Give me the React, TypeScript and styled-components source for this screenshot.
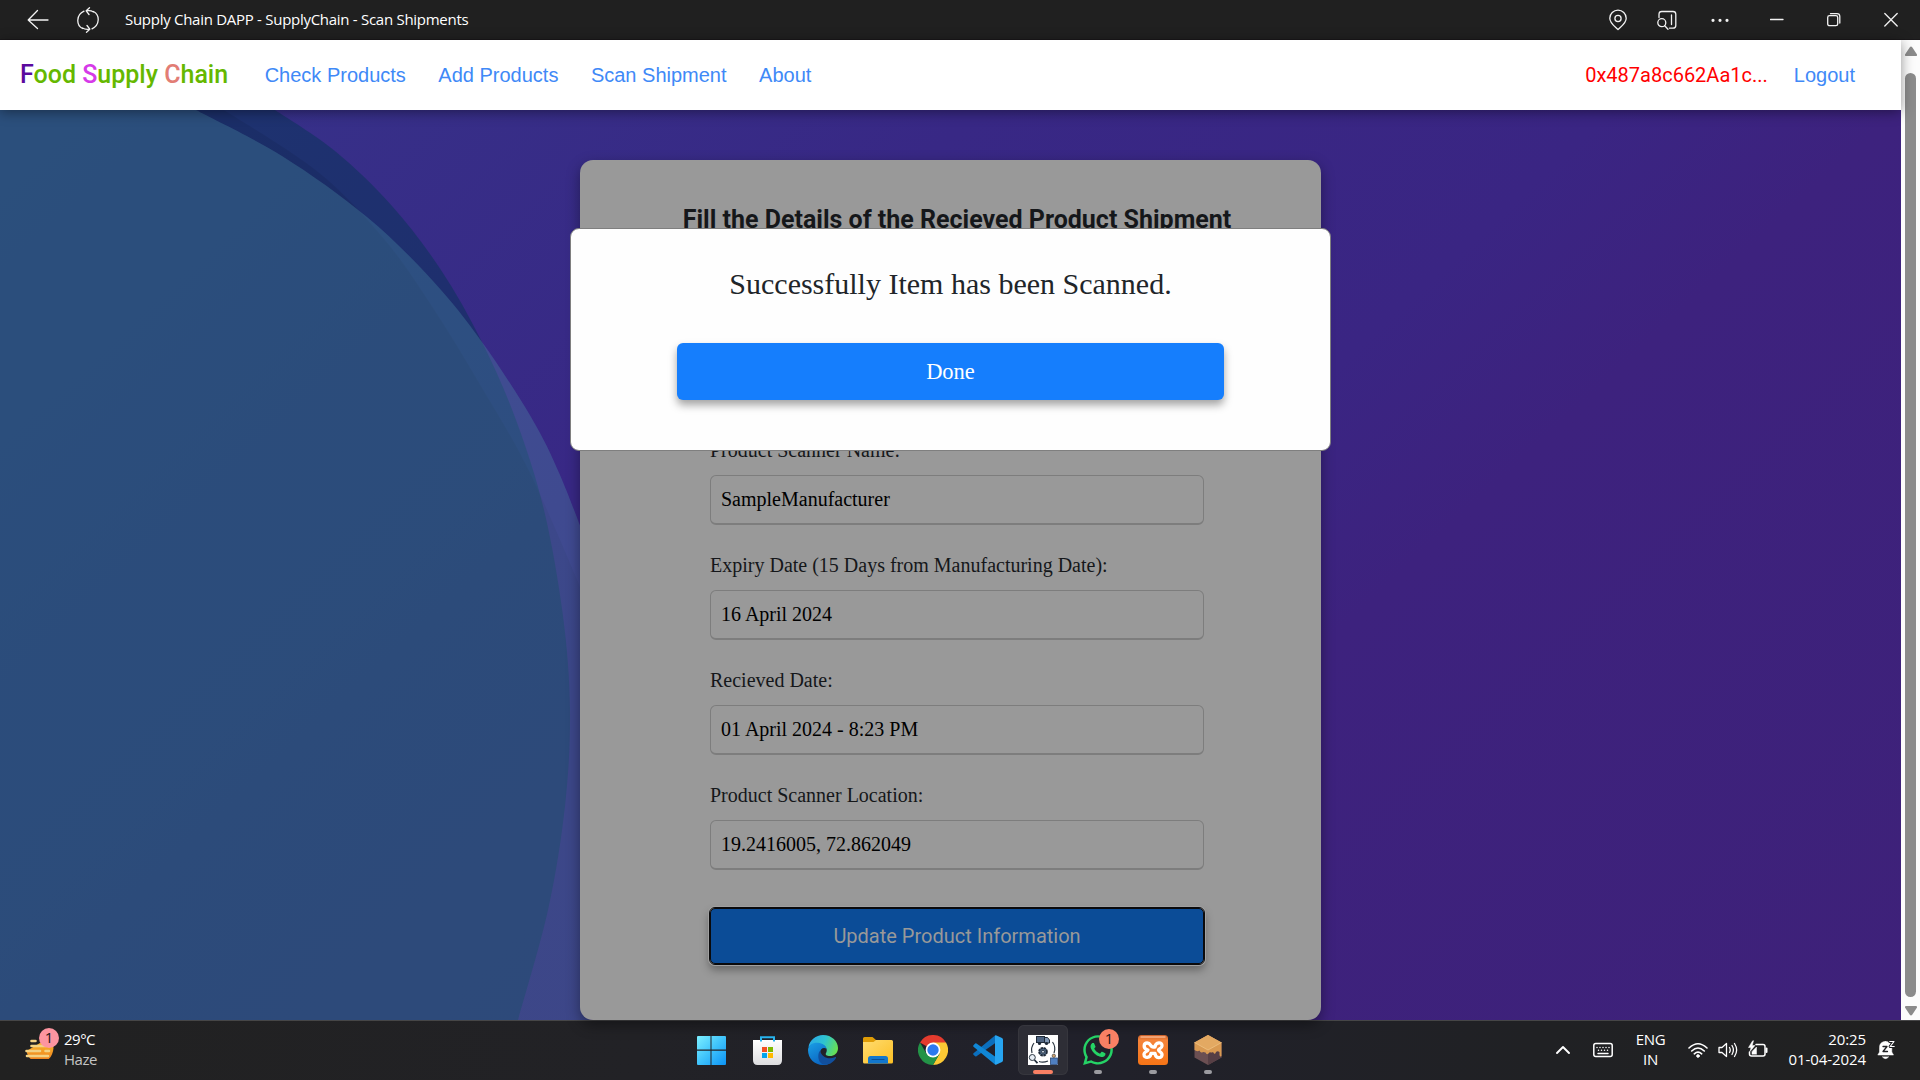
import React from "react";
import styled, { createGlobalStyle } from "styled-components";
import { FaWhatsapp } from "react-icons/fa";

const SERIF = `"Liberation Serif", "Times New Roman", serif`;
const SANS = `"Liberation Sans", Arial, sans-serif`;
const ROBOTO = `Roboto, "Liberation Sans", sans-serif`;
const SYSTEM = `"Open Sans", "Noto Sans", sans-serif`;

const GlobalStyle = createGlobalStyle`
  *, *::before, *::after { box-sizing: border-box; }
  body { margin: 0; overflow: hidden; background: #202020; }
`;

const Screen = styled.div`
  display: flex;
  flex-direction: column;
  width: 1920px;
  height: 1080px;
`;

/* ---------- window title bar ---------- */

const TitleBar = styled.header`
  display: flex;
  align-items: center;
  height: 40px;
  flex: none;
  padding: 0 22px 0 27px;
  background: #202020;
  border-bottom: 1px solid #1a181a;
  color: #fff;
`;

const WindowTitle = styled.span`
  flex: 1;
  margin-left: 26px;
  padding-bottom: 2px;
  font: 15px/20px ${SYSTEM};
  letter-spacing: -0.28px;
  white-space: nowrap;
`;

const TitleIcon = styled.svg<{ $w: number; $gap?: number }>`
  display: block;
  flex: none;
  width: ${(p) => p.$w}px;
  height: 26px;
  margin-left: ${(p) => p.$gap ?? 0}px;
  fill: none;
  stroke: #f2f2f2;
  stroke-width: 1.3;
  stroke-linecap: round;
  stroke-linejoin: round;
`;

/* ---------- browser viewport ---------- */

const Viewport = styled.div`
  display: flex;
  height: 980px;
  flex: none;
`;

const Page = styled.div`
  display: flex;
  flex-direction: column;
  width: 1901px;
`;

const NavBar = styled.nav`
  display: flex;
  align-items: center;
  height: 70px;
  flex: none;
  padding: 0 46px 0 20px;
  background: #fff;
  box-shadow: 0 2px 12px rgba(0, 0, 0, 0.42);
  z-index: 2;
`;

const Brand = styled.span`
  margin-right: 36.5px;
  font: 500 25px/30px ${ROBOTO};
  color: #65b800;
`;

const Initial = styled.span<{ $color: string }>`
  color: ${(p) => p.$color};
`;

const NavLinks = styled.div`
  display: flex;
  flex: 1;
  gap: 32.5px;
`;

const NavLink = styled.a`
  font: 20px/30px ${SANS};
  color: #4089f7;
  white-space: nowrap;
`;

const Account = styled.span`
  margin-right: 26px;
  font: 20px/30px ${ROBOTO};
  color: #ff0000;
`;

const Main = styled.main`
  position: relative;
  flex: 1;
  padding: 50px 0 0 580px;
  background: linear-gradient(137deg, #36338a 0%, #382885 34%, #3a2583 56%, #3d227e 66%, #3e2179 100%);
`;

const Backdrop = styled.svg`
  position: absolute;
  inset: 0;
  width: 100%;
  height: 100%;
`;

const Card = styled.section`
  position: relative;
  display: flex;
  flex-direction: column;
  width: 741px;
  height: 860px;
  padding: 45px 117px 0 130px;
  border-radius: 13px;
  background: #999;
  box-shadow: 0 5px 14px rgba(0, 0, 0, 0.38);
`;

const CardTitle = styled.h1`
  align-self: center;
  margin: 0 0 200px;
  font: bold 25px/30px ${ROBOTO};
  color: #15171a;
  white-space: nowrap;
`;

const Field = styled.label`
  display: flex;
  flex-direction: column;
  gap: 10px;
  margin-bottom: 25px;
  font: 20px/30px ${SERIF};
  color: #15171a;
`;

const FieldValue = styled.span`
  display: flex;
  align-items: center;
  height: 50px;
  padding: 0 10px 2px;
  border: 1px solid #7d7d7d;
  border-bottom-width: 2px;
  border-radius: 6px;
  color: #000;
`;

const SubmitButton = styled.button`
  height: 56px;
  margin-top: 13px;
  padding: 0;
  border: 1px solid #0a0a0c;
  border-radius: 5px;
  outline: 1px solid #0a0a0c;
  background: #0b4c97;
  box-shadow: 0 0 0 2px #a0a0a0, 0 5px 9px 1px rgba(0, 0, 0, 0.34);
  font: 20px/30px ${ROBOTO};
  color: #999;
`;

const Dialog = styled.div`
  position: absolute;
  top: 118px;
  left: 570px;
  display: flex;
  flex-direction: column;
  align-items: center;
  width: 761px;
  height: 223px;
  padding-top: 32px;
  border: 1px solid #7f7f7f;
  border-radius: 9px;
  background: #fefefe;
`;

const DialogText = styled.p`
  margin: 0;
  font: 30px/45px ${SERIF};
  color: #212529;
`;

const DoneButton = styled.button`
  width: 547px;
  height: 57px;
  margin-top: 37px;
  padding: 0;
  border: 0;
  border-radius: 6px;
  background: #157efd;
  box-shadow: 0 5px 8px rgba(0, 0, 0, 0.36);
  font: 22.5px/34px ${SERIF};
  color: #fff;
`;

const Scrollbar = styled.div`
  display: flex;
  flex-direction: column;
  align-items: center;
  width: 19px;
  padding: 6px 0 4px;
  background: #fcfcfc;
`;

const Arrow = styled.svg`
  display: block;
  width: 14px;
  height: 11px;
  fill: #8b8b8b;
`;

const Thumb = styled.div`
  flex: 1;
  width: 11px;
  margin: 16px 0 8px;
  border-radius: 6px;
  background: #8b8b8b;
`;

/* ---------- taskbar ---------- */

const Taskbar = styled.footer`
  display: grid;
  grid-template-columns: 684px 600px 1fr;
  height: 60px;
  border-top: 1px solid #464647;
  background: linear-gradient(90deg, #212121 0%, #222226 33%, #21212b 55%, #202124 80%, #212121 100%);
  color: #fff;
  font: 15px/20px ${SYSTEM};
`;

const Weather = styled.div`
  display: flex;
  align-items: flex-start;
  padding: 8px 0 0 24px;
`;

const WeatherIcon = styled.span`
  position: relative;
  width: 40px;
  height: 40px;
`;

const WeatherText = styled.div<{ $muted?: boolean }>`
  letter-spacing: -0.5px;
  color: ${(p) => (p.$muted ? "#c4c4c4" : "#fff")};
`;

const Badge = styled.span<{ $color: string; $x: number; $y: number }>`
  position: absolute;
  left: ${(p) => p.$x}px;
  top: ${(p) => p.$y}px;
  width: 20px;
  height: 20px;
  border-radius: 50%;
  background: ${(p) => p.$color};
  color: #1c1416;
  font: 15px/19px ${SYSTEM};
  text-align: center;
`;

const Apps = styled.div`
  display: flex;
  gap: 5px;
  padding: 4px 0 0 4px;
`;

const AppCell = styled.div<{ $active?: boolean; $shift?: number }>`
  position: relative;
  display: flex;
  flex-direction: column;
  align-items: center;
  width: 50px;
  height: 50px;
  padding: 10px ${(p) => p.$shift ?? 0}px 0 0;
  border-radius: 6px;
  background: ${(p) => (p.$active ? "#2e2e36" : "transparent")};
  box-shadow: ${(p) => (p.$active ? "inset 0 0 0 1px #36363d" : "none")};
`;

const AppIcon = styled.svg`
  display: block;
  flex: none;
  width: 30px;
  height: 30px;
`;

const Running = styled.span<{ $active?: boolean }>`
  width: ${(p) => (p.$active ? 20 : 8)}px;
  height: 4px;
  margin-top: 5px;
  border-radius: 2px;
  background: ${(p) => (p.$active ? "#f98064" : "#9b9ba0")};
`;

const Tray = styled.div`
  display: flex;
  align-items: center;
  justify-content: flex-end;
  padding: 0 25px 2px 0;
`;

const TrayIcon = styled.svg<{ $w: number; $gap: number }>`
  display: block;
  flex: none;
  width: ${(p) => p.$w}px;
  height: 20px;
  margin-right: ${(p) => p.$gap}px;
  fill: none;
  stroke: #fff;
  stroke-width: 1.5;
  stroke-linecap: round;
  stroke-linejoin: round;
`;

const Language = styled.div`
  width: 40px;
  margin-right: 17px;
  padding-bottom: 1px;
  text-align: center;
  letter-spacing: -0.3px;
`;

const Clock = styled.div`
  margin-right: 11px;
  padding-bottom: 2px;
  text-align: right;
  letter-spacing: -0.08px;
`;

const fields = [
  ["Product Scanner Name:", "SampleManufacturer"],
  ["Expiry Date (15 Days from Manufacturing Date):", "16 April 2024"],
  ["Recieved Date:", "01 April 2024 - 8:23 PM"],
  ["Product Scanner Location:", "19.2416005, 72.862049"],
];

const links = ["Check Products", "Add Products", "Scan Shipment", "About"];

type Point = [number, number];

/* Closes the left side of the page behind a smooth curve through the points. */
function blob(points: Point[]) {
  let d = `M0 110 H${points[0][0]}`;
  for (let i = 0; i < points.length - 1; i++) {
    const a = points[Math.max(i - 1, 0)];
    const b = points[i];
    const c = points[i + 1];
    const e = points[Math.min(i + 2, points.length - 1)];
    d += ` C${b[0] + (c[0] - a[0]) / 6} ${b[1] + (c[1] - a[1]) / 6} ${c[0] - (e[0] - b[0]) / 6} ${c[1] - (e[1] - b[1]) / 6} ${c[0]} ${c[1]}`;
  }
  return `${d} V1020 H0 Z`;
}

const blueDisc: Point[] = [[275, 110], [335, 151], [392, 206], [441, 270], [482, 342], [516, 420], [544, 510], [563, 616], [570, 710], [565, 806], [548, 910], [518, 1020]];
const darkDisc: Point[] = [[224, 110], [318, 172], [384, 239], [433, 308], [482, 388], [531, 475], [590, 610]];
const tealDisc: Point[] = [[196, 110], [282, 156], [367, 217], [433, 281], [482, 342], [531, 417], [560, 475], [590, 552]];

function Shapes() {
  return (
    <Backdrop viewBox="0 110 1901 910" preserveAspectRatio="none">
      <path d={blob(blueDisc)} fill="rgb(0,52,80)" fillOpacity="0.44" />
      <path d={blob(darkDisc)} fill="#000" fillOpacity="0.07" />
      <path d={blob(tealDisc)} fill="rgb(82,152,170)" fillOpacity="0.31" />
    </Backdrop>
  );
}

function WeatherDrawing() {
  return (
    <AppIcon viewBox="0 0 30 30">
      <defs>
        <linearGradient id="sun" x1="0" y1="0" x2="0" y2="1">
          <stop offset="0" stopColor="#fbc02f" />
          <stop offset="1" stopColor="#ec7a1c" />
        </linearGradient>
      </defs>
      <path d="M2.500 22 C4 30 10 33.500 15.500 33.500 C23 33.500 29 28 29.500 19 L28 10 L16 14 Z" fill="url(#sun)" />
      <path d="M7.500 12 H11.500 M7.500 17 H22 M2.500 22 H16 M21.500 22 H25 M3 27 H24" stroke="#f3d283" strokeWidth="2.600" strokeLinecap="round" />
    </AppIcon>
  );
}

function StartIcon() {
  return (
    <AppIcon viewBox="0 0 30 30">
      <defs>
        <linearGradient id="win" x1="0" y1="0" x2="1" y2="1">
          <stop offset="0" stopColor="#7df0ff" />
          <stop offset="0.5" stopColor="#3fc3fb" />
          <stop offset="1" stopColor="#0c93f5" />
        </linearGradient>
      </defs>
      <path
        d="M2 1 H14.500 V14.500 H1 V2 Q1 1 2 1 Z M15.500 1 H29 Q30 1 30 2 V14.500 H15.500 Z M1 15.700 H14.500 V30 H2 Q1 30 1 29 Z M15.500 15.700 H30 V29 Q30 30 29 30 H15.500 Z"
        fill="url(#win)"
      />
    </AppIcon>
  );
}

function StoreIcon() {
  return (
    <AppIcon viewBox="0 0 30 30">
      <defs>
        <linearGradient id="bag" x1="0" y1="0" x2="0" y2="1">
          <stop offset="0" stopColor="#ffffff" />
          <stop offset="1" stopColor="#dddddf" />
        </linearGradient>
      </defs>
      <path d="M1 5 H30 V25 Q30 30 25.500 30 H5.500 Q1 30 1 25 Z" fill="url(#bag)" />
      <path d="M9 6.500 V2.200 H22 V6.500" fill="none" stroke="#27b4ee" strokeWidth="2" />
      <rect x="10" y="12" width="5" height="5" fill="#f25022" />
      <rect x="16" y="12" width="5" height="5" fill="#7fba00" />
      <rect x="10" y="18" width="5" height="5" fill="#00a4ef" />
      <rect x="16" y="18" width="5" height="5" fill="#ffb900" />
    </AppIcon>
  );
}

function EdgeIcon() {
  return (
    <AppIcon viewBox="0 0 30 30">
      <defs>
        <linearGradient id="edgeTop" x1="0" y1="0.300" x2="1" y2="0.600">
          <stop offset="0" stopColor="#2aa9e8" />
          <stop offset="0.500" stopColor="#2fc4cf" />
          <stop offset="1" stopColor="#69e04f" />
        </linearGradient>
        <linearGradient id="edgeLeft" x1="0" y1="0" x2="0.600" y2="1">
          <stop offset="0" stopColor="#1a9fe6" />
          <stop offset="1" stopColor="#0a63c0" />
        </linearGradient>
      </defs>
      <path d="M0.500 12 C1.500 5 8 0 15 0 C24 0 30 6.500 30 13 C30 18.500 26 21 22 21 C18.500 21 17.300 19.500 17.800 18.400 C18.500 17 19 16 18.600 14 C17.500 9.500 7 6 0.500 12 Z" fill="url(#edgeTop)" />
      <path d="M0 15 C0.300 9.500 5.500 7.200 10 7.800 C14.500 8.200 18 10.500 18.700 14 C16 11.500 12 13.500 12 18 C12 23.500 17 28.500 22 28.200 C20 29.500 17.500 30 15 30 C6.500 30 0 23.500 0 15 Z" fill="url(#edgeLeft)" />
      <path d="M12.200 15.800 C9 18.500 9.500 30 17.500 29.700 C22.500 29.500 26 26.500 28 23 C28.300 22 27.500 21.800 26.800 22.200 C21 25 13.500 22.500 12.200 15.800 Z" fill="#114f9d" />
    </AppIcon>
  );
}

function ExplorerIcon() {
  return (
    <AppIcon viewBox="0 0 30 30">
      <defs>
        <linearGradient id="folder" x1="0" y1="0" x2="1" y2="1">
          <stop offset="0" stopColor="#ffdc70" />
          <stop offset="1" stopColor="#fcbf24" />
        </linearGradient>
      </defs>
      <path d="M0 3.500 Q0 2 1.500 2 H9.500 L13 5 H28 V12 H0 Z" fill="#df9c06" />
      <path d="M0 7 H10.500 L13 5 H28.500 Q30 5 30 6.500 V27 Q30 28.500 28.500 28.500 H1.500 Q0 28.500 0 27 Z" fill="url(#folder)" />
      <path d="M5 28.500 V23.500 Q5 21 7.500 21 H22.500 Q25 21 25 23.500 V28.500 Z" fill="#1277cd" />
      <path d="M9 24.500 H21" stroke="#0a4f96" strokeWidth="1.200" strokeLinecap="round" />
    </AppIcon>
  );
}

function ChromeIcon() {
  return (
    <AppIcon viewBox="0 0 30 30">
      <path d="M15 15 L2 7.500 A15 15 0 0 1 28 7.500 Z" fill="#e33b2e" />
      <path d="M15 7.500 H28 A15 15 0 0 1 15 30 L21.500 18.700 Z" fill="#fcc934" />
      <path d="M2 7.500 A15 15 0 0 0 15 30 L21.500 18.700 L8.500 18.700 Z" fill="#239347" />
      <circle cx="15" cy="15" r="7.400" fill="#fff" />
      <circle cx="15" cy="15" r="5.700" fill="#2d79ef" />
    </AppIcon>
  );
}

function CodeIcon() {
  return (
    <AppIcon viewBox="0 0 30 30">
      <path d="M22 0.500 L22 8.300 L3.500 21.300 Q2.800 21.700 2.200 21.200 L0.500 19.700 Q-0.300 19 0.500 18.200 Z" fill="#0b6fbd" />
      <path d="M22 29.500 V21.500 L3.500 8.500 Q2.800 8 2.200 8.600 L0.500 10.200 Q-0.300 11 0.500 11.700 Z" fill="#1087d6" />
      <path d="M22 0.500 Q22.800 0 23.500 0.400 L29 3 Q30 3.500 30 4.700 V25.300 Q30 26.500 29 27 L23.500 29.600 Q22.700 30 22 29.500 Z" fill="#27a5f1" />
    </AppIcon>
  );
}

function SupplyChainIcon() {
  return (
    <AppIcon viewBox="0 0 30 30">
      <rect width="30" height="30" fill="#fff" />
      <path d="M6 8 A11.500 11.500 0 0 0 4 18 M24.500 7 A11.500 11.500 0 0 1 26 18 M11 26.500 Q15 28 20 26" fill="none" stroke="#2a3540" strokeWidth="1.200" />
      <rect x="8.500" y="1.500" width="8" height="6" fill="#4d6380" stroke="#1f2a38" />
      <path d="M16.500 2.500 H19.500 L21.500 5 V8 H16.500 Z" fill="#7f96b3" stroke="#1f2a38" />
      <circle cx="11.500" cy="8.500" r="1.600" fill="#1f2a38" />
      <circle cx="18.500" cy="8.500" r="1.600" fill="#1f2a38" />
      <circle cx="15" cy="16.700" r="3.800" fill="#55708f" stroke="#1f2a38" strokeWidth="2" strokeDasharray="2.400 0.600" />
      <circle cx="15" cy="16.700" r="1.500" fill="#c6d2e0" stroke="#1f2a38" strokeWidth="0.900" />
      <circle cx="4.300" cy="22.500" r="3" fill="#e8eef5" stroke="#2a3540" />
      <path d="M6.500 25 L9.500 28.200" stroke="#1f2a38" strokeWidth="1.800" />
      <rect x="22.500" y="23" width="7" height="6.500" fill="#4f7fc0" stroke="#2b4a78" strokeWidth="0.800" />
      <circle cx="25.800" cy="20.800" r="1.700" fill="#cfa06c" stroke="#2a3540" strokeWidth="0.600" />
    </AppIcon>
  );
}

function XamppIcon() {
  return (
    <AppIcon viewBox="0 0 30 30">
      <defs>
        <linearGradient id="xampp" x1="0" y1="0" x2="0" y2="1">
          <stop offset="0" stopColor="#c9602a" />
          <stop offset="0.180" stopColor="#f5843a" />
          <stop offset="1" stopColor="#f67416" />
        </linearGradient>
      </defs>
      <rect width="30" height="30" rx="3.500" fill="url(#xampp)" />
      <path d="M3 2 H27" stroke="#f9b48b" strokeWidth="1.500" strokeLinecap="round" />
      <path
        d="M10 15 C4.500 13.500 5.500 8 9.300 8 C13 8 12 12 15 12 H17 C17.500 7 24.500 6.500 24 11 C23.800 14 20.500 13.500 20.500 15 C20.500 16.500 24.500 17 24 20 C23.500 24 17.500 23.500 17 18.300 H13 C12.500 23.500 6 23.500 6 19.500 C6 16.500 10 16.500 10 15 Z"
        fill="none"
        stroke="#fff"
        strokeWidth="3.300"
        strokeLinejoin="round"
      />
    </AppIcon>
  );
}

function BlockIcon() {
  return (
    <AppIcon viewBox="0 0 30 30">
      <path d="M15 0 L28.500 7.500 V22.500 L15 30 L1.500 22.500 V7.500 Z" fill="#6b4f52" />
      <path d="M15 15 L28.500 7.500 V22.500 L15 30 Z" fill="#573f45" />
      <path d="M15 0 L28.500 7.500 V21 Q27 22.500 26.500 20 V17 Q24.500 15.500 23 17 Q22.500 19.500 21 18.500 L20 17 Q18 18 17 17 Q14 21 12.500 17.500 Q10 16.500 9 17.500 Q7.500 18 6.500 15.500 Q4 17 1.500 15 V7.500 Z" fill="#d99a52" />
      <path d="M15 0 L28.500 7.500 L15 15 L1.500 7.500 Z" fill="#e3a962" />
      <path d="M1.500 7.500 L15 15 L28.500 7.500" fill="none" stroke="#efc283" strokeWidth="0.800" />
    </AppIcon>
  );
}

const WhatsAppIcon = styled(FaWhatsapp)`
  display: block;
  flex: none;
  width: 34px;
  height: 34px;
  margin: -2px;
  color: #25d366;
`;

export default function App() {
  return (
    <Screen>
      <GlobalStyle />
      <TitleBar>
        <TitleIcon $w={22} viewBox="0 0 22 26">
          <path d="M21 13 H1.500 M10.500 3.500 L1.200 13 L10.500 21.500" />
        </TitleIcon>
        <TitleIcon $w={22} $gap={28} viewBox="0 0 22 26">
          <path d="M7 4.200 C-1 8 -1 18 5.500 21.500 M15 21.800 C23 18 23 8 16.500 4.500 M12.500 0.800 L9.200 3.800 L12 7.500 M9.500 3.800 C13 3.300 15 4 16.500 5 M9.500 25.200 L12.800 22.200 L10 18.500 M12.500 22.200 C9 22.700 7 22 5.500 21" />
        </TitleIcon>
        <WindowTitle>Supply Chain DAPP - SupplyChain - Scan Shipments</WindowTitle>
        <TitleIcon $w={18} viewBox="0 0 18 26">
          <path d="M9 22.500 C6 19.500 0.800 16.500 0.800 11.300 A8.200 8.200 0 0 1 17.200 11.300 C17.200 16.500 12 19.500 9 22.500 Z" />
          <circle cx="9" cy="11.500" r="3.100" />
        </TitleIcon>
        <TitleIcon $w={20} $gap={30} viewBox="0 0 20 26">
          <path d="M2 10.500 V7.300 Q2 4.500 4.800 4.500 H16 Q18.800 4.500 18.800 7.300 V18.500 Q18.800 21.200 16 21.200 H12.500 M14.500 8 V17.500" />
          <circle cx="4.800" cy="15.700" r="4" />
          <path d="M7.700 18.800 L11 22.200" />
        </TitleIcon>
        <TitleIcon $w={18} $gap={34} viewBox="0 0 18 26">
          <path d="M2 13.300 h0.010 M9 13.300 h0.010 M16 13.300 h0.010" strokeWidth="3.200" />
        </TitleIcon>
        <TitleIcon $w={14} $gap={41} viewBox="0 0 14 26">
          <path d="M0.500 12.500 H13" />
        </TitleIcon>
        <TitleIcon $w={14} $gap={43} viewBox="0 0 14 26">
          <rect x="0.700" y="8.700" width="10" height="10" rx="1.800" />
          <path d="M3.500 6.700 H10 Q12.800 6.700 12.800 9.500 V16" />
        </TitleIcon>
        <TitleIcon $w={14} $gap={43} viewBox="0 0 14 26">
          <path d="M0.800 6.500 L13.200 19 M13.200 6.500 L0.800 19" />
        </TitleIcon>
      </TitleBar>

      <Viewport>
        <Page>
          <NavBar>
            <Brand>
              <Initial $color="#5b0a9e">F</Initial>ood <Initial $color="#d63ae8">S</Initial>upply{" "}
              <Initial $color="#e27d75">C</Initial>hain
            </Brand>
            <NavLinks>
              {links.map((text) => (
                <NavLink key={text}>{text}</NavLink>
              ))}
            </NavLinks>
            <Account>0x487a8c662Aa1c...</Account>
            <NavLink>Logout</NavLink>
          </NavBar>
          <Main>
            <Shapes />
            <Card>
              <CardTitle>Fill the Details of the Recieved Product Shipment</CardTitle>
              {fields.map(([label, value]) => (
                <Field key={label}>
                  {label}
                  <FieldValue>{value}</FieldValue>
                </Field>
              ))}
              <SubmitButton>Update Product Information</SubmitButton>
            </Card>
            <Dialog>
              <DialogText>Successfully Item has been Scanned.</DialogText>
              <DoneButton>Done</DoneButton>
            </Dialog>
          </Main>
        </Page>
        <Scrollbar>
          <Arrow viewBox="0 0 14 11">
            <path d="M7 0.500 Q7.700 0.500 8.200 1.300 L13 8.500 Q13.500 10 12 10 H2 Q0.500 10 1 8.500 L5.800 1.300 Q6.300 0.500 7 0.500 Z" />
          </Arrow>
          <Thumb />
          <Arrow viewBox="0 0 14 11">
            <path d="M7 10.500 Q7.700 10.500 8.200 9.700 L13 2.500 Q13.500 1 12 1 H2 Q0.500 1 1 2.500 L5.800 9.700 Q6.300 10.500 7 10.500 Z" />
          </Arrow>
        </Scrollbar>
      </Viewport>

      <Taskbar>
        <Weather>
          <WeatherIcon>
            <WeatherDrawing />
            <Badge $color="#fd95a0" $x={15} $y={-1}>1</Badge>
          </WeatherIcon>
          <div>
            <WeatherText>29°C</WeatherText>
            <WeatherText $muted>Haze</WeatherText>
          </div>
        </Weather>
        <Apps>
          <AppCell $shift={4}><StartIcon /></AppCell>
          <AppCell $shift={2}><StoreIcon /></AppCell>
          <AppCell><EdgeIcon /></AppCell>
          <AppCell><ExplorerIcon /></AppCell>
          <AppCell><ChromeIcon /></AppCell>
          <AppCell><CodeIcon /></AppCell>
          <AppCell $active>
            <SupplyChainIcon />
            <Running $active />
          </AppCell>
          <AppCell>
            <WhatsAppIcon />
            <Badge $color="#f98064" $x={26} $y={4}>1</Badge>
            <Running />
          </AppCell>
          <AppCell>
            <XamppIcon />
            <Running />
          </AppCell>
          <AppCell>
            <BlockIcon />
            <Running />
          </AppCell>
        </Apps>
        <Tray>
          <TrayIcon $w={14} $gap={23} viewBox="0 0 14 20">
            <path d="M1 13 L7 7 L13 13" strokeWidth="1.900" />
          </TrayIcon>
          <TrayIcon $w={20} $gap={18} viewBox="0 0 20 20">
            <rect x="0.800" y="3.500" width="18.400" height="13" rx="2" />
            <path d="M4 7.500 h0.010 M7 7.500 h0.010 M10 7.500 h0.010 M13 7.500 h0.010 M16 7.500 h0.010 M5.500 10.300 h0.010 M8.500 10.300 h0.010 M11.500 10.300 h0.010 M14.500 10.300 h0.010 M5 13.500 H15" />
          </TrayIcon>
          <Language>
            <div>ENG</div>
            <div>IN</div>
          </Language>
          <TrayIcon $w={20} $gap={10} viewBox="0 0 20 20">
            <path d="M1 8 Q10 -0.500 19 8 M3.700 11 Q10 5 16.300 11 M6.300 13.800 Q10 10.300 13.700 13.800" strokeWidth="1.600" />
            <circle cx="10" cy="16" r="1.300" fill="#fff" strokeWidth="1" />
          </TrayIcon>
          <TrayIcon $w={20} $gap={10} viewBox="0 0 20 20">
            <path d="M1 7.500 H4 L8.500 3.500 V16.500 L4 12.500 H1 Z M11.500 7.500 Q13 10 11.500 12.500 M14 5.500 Q16.800 10 14 14.500 M16.500 3.500 Q20.800 10 16.500 16.500" strokeWidth="1.300" />
          </TrayIcon>
          <TrayIcon $w={20} $gap={21} viewBox="0 0 20 20">
            <path d="M8 4.500 H15 Q17 4.500 17 6.500 V14 Q17 16 15 16 H3.500 Q1.500 16 1.500 14 V12" />
            <path d="M18.500 8.500 V12" strokeWidth="2" />
            <path d="M4 14 V11.500 L8.500 7 V14 Z" fill="#fff" strokeWidth="0.500" />
            <path d="M4.500 1 L0.500 7.500 H3 L2 11.500 L7 5.500 H4.200 L5.500 1 Z" fill="#fff" strokeWidth="0.500" />
          </TrayIcon>
          <Clock>
            <div>20:25</div>
            <div>01-04-2024</div>
          </Clock>
          <TrayIcon $w={18} $gap={0} viewBox="0 0 18 20">
            <path d="M8.500 1.500 C4.500 1.500 2.500 4 2.500 7.500 V12 L0.800 15 H16.500 L14.800 12 V7.500 C14.800 4 12.500 1.500 8.500 1.500 Z" fill="#fff" strokeWidth="0.500" />
            <path d="M5.500 17 Q8.500 20.500 11.500 17 Z" fill="#fff" strokeWidth="0.500" />
            <path d="M6 6.500 H10 L6 11.500 H10.500" stroke="#202124" strokeWidth="1.300" />
            <path d="M12.800 1.500 H17 L13.200 6.500 H17.200" stroke="#202124" strokeWidth="3" />
            <path d="M12.800 1.500 H17 L13.200 6.500 H17.200" strokeWidth="1.200" />
          </TrayIcon>
        </Tray>
      </Taskbar>
    </Screen>
  );
}
